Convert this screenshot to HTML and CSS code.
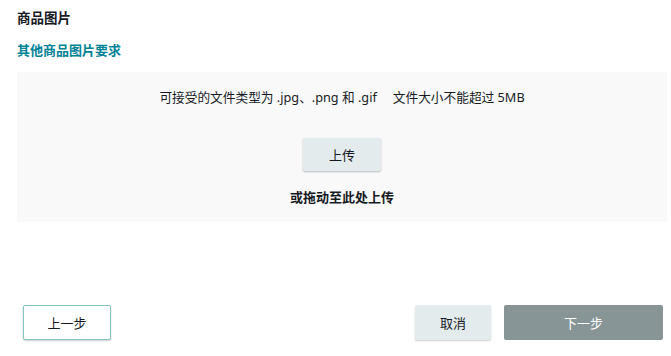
FILE: index.html
```html
<!DOCTYPE html>
<html lang="zh-CN">
<head>
<meta charset="utf-8">
<link rel="stylesheet" href="styles.css">
</head>
<body>
<div class="page">
  <h2 class="title">商品图片</h2>
  <a class="req-link">其他商品图片要求</a>
  <div class="dropzone">
    <p class="accept">可接受的文件类型为 .jpg、.png 和 .gif<span class="gap"></span>文件大小不能超过 5MB</p>
    <button class="btn btn-upload">上传</button>
    <p class="drag">或拖动至此处上传</p>
  </div>
  <div class="footer">
    <button class="btn btn-prev">上一步</button>
    <div class="right">
      <button class="btn btn-cancel">取消</button>
      <button class="btn btn-next">下一步</button>
    </div>
  </div>
</div>
</body>
</html>
```
FILE: styles.css
```css
* { box-sizing: border-box; }
html, body { margin: 0; padding: 0; background: #fff; }
body {
  font-family: "Noto Sans", "Noto Sans CJK SC", sans-serif;
  color: #16191f;
  font-size: 12px;
}
.page {
  width: 671px;
  height: 356px;
  padding: 9px 4px 0 17px;
  display: flex;
  flex-direction: column;
}
.title {
  margin: 0;
  font-size: 13.5px;
  font-weight: 700;
  line-height: 18px;
}
.req-link {
  display: block;
  margin-top: 14px;
  font-size: 13px;
  font-weight: 700;
  color: #008296;
  line-height: 18px;
}
.dropzone {
  margin-top: 13px;
  width: 650px;
  height: 150px;
  background: #f9f9f9;
  display: flex;
  flex-direction: column;
  align-items: center;
  padding-top: 16px;
}
.accept {
  margin: 0;
  line-height: 18px;
  font-size: 12.7px;
}
.gap { display: inline-block; width: 16px; }
.btn {
  font-family: inherit;
  font-size: 13px;
  color: #16191f;
  border: none;
  border-radius: 2px;
  cursor: pointer;
}
.btn-upload {
  margin-top: 32px;
  width: 78px;
  height: 33px;
  background: #e3ebed;
  box-shadow: 0 1px 2px rgba(0,0,0,0.25);
}
.drag {
  margin: 17px 0 0;
  font-weight: 700;
  font-size: 13px;
  line-height: 18px;
}
.footer {
  margin-top: 83px;
  display: flex;
  justify-content: space-between;
  padding: 0 4px 0 6px;
}
.right { display: flex; gap: 13px; }
.btn-prev {
  width: 88px;
  height: 35px;
  background: #fff;
  border: 1px solid #83c5be;
  box-shadow: 0 1px 2px rgba(0,0,0,0.2);
}
.btn-cancel {
  width: 76px;
  height: 35px;
  background: #e3ebed;
  box-shadow: 0 1px 2px rgba(0,0,0,0.2);
}
.btn-next {
  width: 159px;
  height: 35px;
  background: #879596;
  color: #fff;
}
```
